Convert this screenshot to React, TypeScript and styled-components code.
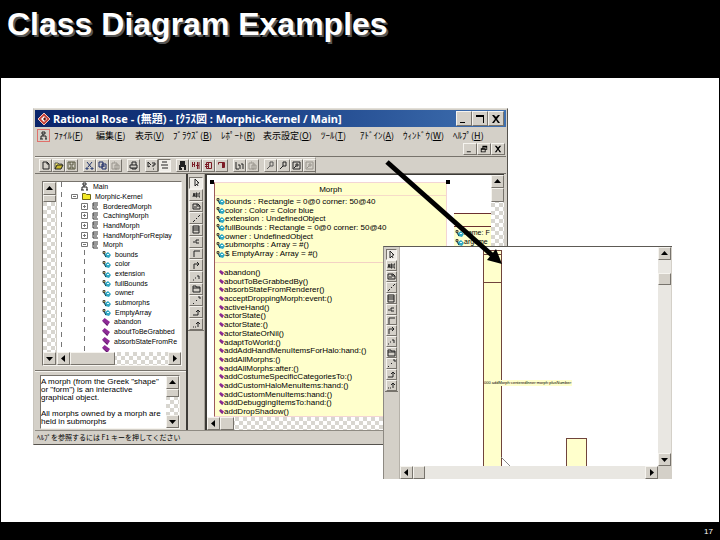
import React from "react";
import styled, { createGlobalStyle, css } from "styled-components";

const FACE = "#d4d0c8";
const LIGHT = "#f6f4ef";
const SHADE = "#77736c";
const CARD = "#ffffcc";
const SANS = '"Liberation Sans", "Noto Sans CJK JP", sans-serif';

const GlobalStyle = createGlobalStyle`
  * { box-sizing: border-box; }
  html, body { margin: 0; background: #000; }
  body { font-family: ${SANS}; color: #000; }
  button { font: inherit; color: inherit; }
  ul { list-style: none; margin: 0; padding: 0; }
`;

const checker = css`
  background: repeating-conic-gradient(#d8d6d0 0% 25%, #fff 0% 50%) 0 0 / 8px 8px;
`;

const raised = css`
  border: 1px solid;
  border-color: ${LIGHT} ${SHADE} ${SHADE} ${LIGHT};
  background: ${FACE};
`;

/* ---------- slide ---------- */

const Slide = styled.div`
  display: flex;
  flex-direction: column;
  min-height: 100vh;
  background: #000;
`;

const Header = styled.header`
  min-height: 78px;
  padding: 6px 7px;
`;

const Title = styled.h1`
  margin: 0;
  font: bold 32px/36px ${SANS};
  color: #fff;
  text-shadow: 2px 2px 0 #555;
`;

const Stage = styled.main`
  flex: 1;
  display: grid;
  grid-template-columns: 32fr 350fr 125fr 164fr 47fr;
  grid-template-rows: 30px 138px 199px 34px 1fr;
  margin: 0 1px;
  background: #fff;
`;

const Footer = styled.footer`
  display: flex;
  align-items: center;
  justify-content: flex-end;
  height: 18px;
  padding: 2px 7px 0 0;
  font: 8px/10px ${SANS};
  color: #fff;
`;

/* ---------- windows ---------- */

const RoseWindow = styled.section`
  grid-area: 2 / 2 / 4 / 4;
  display: flex;
  flex-direction: column;
  min-width: 0;
  border: 1px solid;
  border-color: #e2dfd8 #55524d #55524d #c8c4bc;
  padding: 1px;
  background: ${FACE};
`;

const TitleBar = styled.div`
  display: flex;
  align-items: center;
  gap: 2px;
  height: 17px;
  padding: 0 2px;
  background: linear-gradient(90deg, #0a246a, #1c4288 50%, #3f70b0);
  color: #fff;
`;

const Caption = styled.h2`
  flex: 1;
  margin: 0;
  font: bold 11px/16px "Noto Sans", "Noto Sans CJK JP", sans-serif;
  white-space: nowrap;
`;

const ButtonGroup = styled.div`
  display: flex;
`;

const WindowButton = styled.button<{ $small?: boolean }>`
  ${raised}
  display: grid;
  place-items: center;
  width: ${(p) => (p.$small ? 14 : 16)}px;
  height: ${(p) => (p.$small ? 12 : 15)}px;
  padding: 0;
`;

const MenuBar = styled.nav`
  display: grid;
  grid-template-columns: 19px 42px 39px 38px 48px 42px 58px 39px 43px 50px 1fr;
  align-items: center;
  height: 15px;
  padding-top: 1px;
`;

const MenuButton = styled.button`
  padding: 0;
  border: 0;
  background: none;
  font: 9px/13px "Noto Sans CJK JP", sans-serif;
  text-align: left;
  white-space: nowrap;
`;

const DocButton = styled(MenuButton)`
  display: grid;
  place-items: center;
  width: 13px;
  height: 13px;
  margin-left: 2px;
  border: 1px solid #e0706a;
`;

const ChildButtons = styled.div`
  display: flex;
  justify-content: flex-end;
  height: 15px;
  padding: 1px 1px 0;
  border-bottom: 1px solid ${SHADE};
`;

const ToolBar = styled.div`
  display: flex;
  width: 281px;
  height: 16px;
  padding: 1px 4px;
  gap: 5px;
  border-top: 1px solid ${LIGHT};
  border-right: 1px solid #9a968e;
`;

const ToolGroup = styled.div`
  display: flex;
`;

const ToolButton = styled.button<{ $pressed?: boolean }>`
  ${raised}
  display: grid;
  place-items: center;
  width: 13px;
  height: 13px;
  padding: 0;
  ${(p) => p.$pressed && css`
    background: #efede8;
    border-color: ${SHADE} ${LIGHT} ${LIGHT} ${SHADE};
  `}
`;

const Body = styled.div`
  flex: 1;
  display: grid;
  grid-template-columns: 153px 17px minmax(0, 1fr);
  min-height: 0;
  border-top: 1px solid ${SHADE};
`;

const SidePane = styled.div`
  display: flex;
  flex-direction: column;
  border-right: 2px solid #3c3a36;
`;

const TreeFrame = styled.div`
  display: grid;
  grid-template-columns: 14px minmax(0, 1fr);
  height: 185px;
  margin: 7px 4px 4px 7px;
  border: 1px solid;
  border-color: ${SHADE} ${LIGHT} ${LIGHT} ${SHADE};
`;

const TreeColumn = styled.div`
  display: flex;
  flex-direction: column;
  min-width: 0;
`;

const Tree = styled.ul`
  flex: 1;
  display: grid;
  grid-template-rows: repeat(17, 1fr) 6px;
  overflow: hidden;
  background:
    repeating-linear-gradient(#777 0 5px, #fff 5px 10px) 4px 0 / 1px 100% no-repeat,
    #fff;
`;

const TreeItem = styled.li<{ $level: number }>`
  display: flex;
  align-items: center;
  gap: 4px;
  min-height: 0;
  padding-left: ${(p) => [23, 14, 24, 45][p.$level]}px;
  font: 7px/9px ${SANS};
  white-space: nowrap;
  ${(p) => p.$level === 3 && css`
    background: linear-gradient(#777 0 5px, transparent 5px) 27px 0 / 1px 100% no-repeat;
  `}
`;

const Expander = styled.button`
  display: grid;
  place-items: center;
  width: 7px;
  height: 7px;
  padding: 0;
  border: 0;
  background: #fff;
`;

const DocFrame = styled.div`
  display: flex;
  height: 54px;
  margin: 0 6px 0 5px;
  border: 1px solid;
  border-color: ${SHADE} ${LIGHT} ${LIGHT} ${SHADE};
`;

const Splitter = styled.div`
  height: 5px;
  border-top: 1px solid ${SHADE};
  box-shadow: inset 0 1px 0 ${LIGHT};
`;

const DocText = styled.textarea`
  flex: 1;
  min-width: 0;
  padding: 2px 0 0;
  border: 0;
  outline: 0;
  resize: none;
  overflow: hidden;
  background: #fff;
  color: #000;
  font: 8px/8px ${SANS};
`;

/* ---------- scroll bars ---------- */

const Bar = styled.div<{ $horizontal?: boolean; $plain?: boolean }>`
  display: flex;
  flex: none;
  flex-direction: ${(p) => (p.$horizontal ? "row" : "column")};
  ${(p) => (p.$horizontal ? "height: 13px;" : "width: 13px;")}
  ${(p) => (p.$plain ? "background: #e9e7e2;" : checker)}
`;

const BarButton = styled.button`
  ${raised}
  display: grid;
  place-items: center;
  flex: none;
  width: 13px;
  height: 13px;
  padding: 0;
`;

const Space = styled.div<{ $size?: number }>`
  flex: ${(p) => (p.$size === undefined ? "1" : `0 0 ${p.$size}px`)};
`;

const Thumb = styled.div<{ $size: number }>`
  ${raised}
  flex: 0 0 ${(p) => p.$size}px;
`;

const Corner = styled.div`
  background: ${FACE};
`;

type Dir = "up" | "down" | "left" | "right";
const arrowShape: Record<Dir, string> = {
  up: "M0 5h7L3.5 1z",
  down: "M0 2h7L3.5 6z",
  left: "M5 0v7L1 3.5z",
  right: "M2 0v7l4-3.5z",
};

function Arrow({ dir }: { dir: Dir }) {
  return (
    <BarButton aria-label={`Scroll ${dir}`}>
      <svg width="7" height="7" viewBox="0 0 7 7"><path d={arrowShape[dir]} /></svg>
    </BarButton>
  );
}

interface ScrollProps {
  horizontal?: boolean;
  plain?: boolean;
  before?: number;
  thumb: number;
}

function ScrollBar({ horizontal, plain, before = 0, thumb }: ScrollProps) {
  return (
    <Bar $horizontal={horizontal} $plain={plain}>
      <Arrow dir={horizontal ? "left" : "up"} />
      <Space $size={before} />
      <Thumb $size={thumb} />
      <Space />
      <Arrow dir={horizontal ? "right" : "down"} />
    </Bar>
  );
}

/* ---------- diagram ---------- */

const ToolBox = styled.div<{ $height: number }>`
  display: grid;
  grid-auto-rows: 1fr;
  height: ${(p) => p.$height}px;
  padding: 0 1px;
  border-bottom: 1px solid ${SHADE};
  ${ToolButton} { width: 100%; height: 100%; min-height: 0; }
`;

const ToolSide = styled.div`
  padding-top: 3px;
  border-right: 1px solid #a7a39b;
`;

const Canvas = styled.div`
  display: grid;
  grid-template-columns: minmax(0, 1fr) 13px;
  grid-template-rows: minmax(0, 1fr) 13px;
  min-width: 0;
  border-left: 2px solid #3c3a36;
  border-top: 1px solid #3c3a36;
  margin: 0 2px 1px 0;
`;

const Sheet = styled.div`
  display: flex;
  align-items: flex-start;
  gap: 4px;
  padding: 5px 0 0 3px;
  overflow: hidden;
  background: #fff;
`;

const ClassFrame = styled.div`
  flex: 0 0 240px;
  display: grid;
  grid-template-columns: 4px 1fr 4px;
`;

const Handle = styled.i`
  z-index: 1;
  width: 4px;
  height: 4px;
  background: #000;
  &:nth-of-type(2) { grid-column: 3; }
`;

const ClassCard = styled.article`
  grid-column: 1 / -1;
  margin: -2px 3px 0 4px;
  border: 1px solid #f3d5d5;
  border-left-color: #9c5a5a;
  background: ${CARD};
`;

const ClassName = styled.h3`
  margin: 0;
  height: 13px;
  border-bottom: 1px solid #f6dcc8;
  text-align: center;
  font: 8px/14px ${SANS};
`;

const Features = styled.ul<{ $height: number; $tail?: boolean }>`
  display: grid;
  grid-auto-rows: 1fr;
  height: ${(p) => p.$height}px;
  margin: ${(p) => (p.$tail ? "5px 0 0 4px" : "1px 0 4px 1px")};
`;

const Feature = styled.li`
  display: flex;
  align-items: center;
  min-height: 0;
  font: 8px/9px ${SANS};
  white-space: nowrap;
`;

const Divider = styled.hr`
  height: 1px;
  margin: 0;
  border: 0;
  background: #f3d2c4;
`;

const SideCard = styled.article`
  flex: 1;
  min-width: 0;
  margin-top: 33px;
  border-top: 1px solid #6b3030;
  background: ${CARD};
  overflow: hidden;
  ${Feature} { font-size: 7px; }
`;

const SideHead = styled.div`
  height: 13px;
  border-bottom: 1px solid #6b3030;
`;

const StatusBar = styled.div`
  height: 13px;
  padding-left: 2px;
  border-top: 1px solid #8f8b83;
  font: 7px/12px "Noto Sans CJK JP", sans-serif;
  white-space: nowrap;
`;

/* ---------- second window ---------- */

const DetailWindow = styled.section`
  grid-area: 3 / 3 / 5 / 5;
  z-index: 1;
  display: grid;
  grid-template-columns: 16px minmax(0, 1fr) 13px;
  grid-template-rows: minmax(0, 1fr) 13px;
  padding-right: 1px;
  border-top: 1px solid #5d5a55;
  border-left: 1px solid #8d8982;
  background: ${FACE};
`;

const DetailTools = styled.div`
  grid-row: 1 / 3;
  padding: 2px 1px 0;
  border-right: 1px solid #b5b1a9;
`;

const DetailSheet = styled.div`
  position: relative;
  overflow: hidden;
  background: #fff;
`;

const TallClass = styled.div`
  position: absolute;
  top: 3px;
  bottom: 0;
  left: 83px;
  width: 19px;
  border: 1px solid #70443c;
  border-bottom: 0;
  background: ${CARD};
  &::before, &::after {
    content: "";
    display: block;
    border-bottom: 1px solid #70443c;
  }
  &::before { height: 3px; }
  &::after { height: 27px; }
`;

const ShortClass = styled.div`
  position: absolute;
  bottom: 0;
  left: 166px;
  width: 21px;
  height: 28px;
  border: 1px solid #70443c;
  border-bottom: 0;
  background: ${CARD};
`;

const RelationLabel = styled.span`
  position: absolute;
  top: 133px;
  left: 84px;
  background: ${CARD};
  font: 4px/6px ${SANS};
  white-space: nowrap;
`;

const RelationLine = styled.svg`
  position: absolute;
  bottom: 0;
  left: 101px;
`;

const Pointer = styled.svg`
  grid-area: 2 / 3 / 4 / 4;
  z-index: 2;
  margin-top: 50px;
  pointer-events: none;
`;

/* ---------- icons ---------- */

const paths = {
  arrow: "M3 1v7l2-2 1 2M3 1l4 4H5",
  abc: "M1 7l1-4 1 4M1.5 5.500h1M4 7V3h1v4zM8 3H7v4h1M4 5h1",
  note: "M1 2h5l2 2v3H1zM5 2v2h3M2 5h3",
  line: "M1 8l2-2M4 5l1-1M6 3l2-2",
  klass: "M1 1h6v7H1zM1 3h6M1 5h6",
  iface: "M4 3h3M4 3v3h3M1 5h2",
  assoc: "M2 8V2h6",
  dir: "M2 8V3h5M5 1l2 2-2 2",
  dash: "M1 7h1M3 5h1M5 3h2v3",
  pack: "M1 8V2h3v1h4v5zM1 4h7",
  dep: "M1 8l1-1M4 5l1-1M6 1h2v2",
  gen: "M1 7h5V2M4 4l2-2 2 2",
  real: "M1 7h1M3 7h1M6 7V2M4 4l2-2 2 2",
  fresh: "M2 1h4l2 2v5H2zM6 1v2h2",
  save: "M1 1h7v7H1zM3 1v3h3V1M3 8V6h3v2",
  cut: "M2 1l4 5M7 1L3 6M1 7h2v1H1zM6 7h2v1H6z",
  copy: "M1 1h4v5H1zM4 3h4v5H4zM5 5h2",
  paste: "M1 2h5v6H1zM3 1h1M4 4h4v4H4z",
  print: "M1 4h7v3H1zM3 4V1h4v3M3 7v1h4V7",
  help: "M1 1v5l2-1M1 1l3 3M5 2h3v2H6v2M6 8h1",
  rows: "M2 1h5M1 4h7M2 7h6",
  tree: "M3 1h3v2H3zM4 3v2M2 8V5h5v3M1 8h3M6 8h2",
  inter: "M1.500 1v5M3.500 1v5M1 3.500h3M6.500 1v7M8 1v7M5 4.500h3",
  comp: "M2.500 1.500h5v6h-5zM4.500 2v5M1 3.500h3M1 5.500h3",
  deploy: "M1.500 3.500v-2h6v5h-2M5.500 1v6M6.500 1v6",
  zoom: "M4 1h3v4H4zM4 5L1 8",
  fit: "M1 1h7v7H1zM4 3h2v2H4zM4 5L2 7",
  bars: "M1 1v7h3M3 4h2v4M6 3h2v5",
};
type IconName = keyof typeof paths;

function Glyph({ name, color = "#222", heavy }: { name: IconName; color?: string; heavy?: boolean }) {
  return (
    <svg width="9" height="9" viewBox="0 0 9 9" aria-hidden="true">
      <path d={paths[name]} fill="none" stroke={color} strokeWidth={heavy ? 2 : 1} />
    </svg>
  );
}

function OpenFolder() {
  return (
    <svg width="10" height="9" viewBox="0 0 10 9" aria-hidden="true">
      <path d="M1 8V2h3l1 1h3v2" fill="#f5e96a" stroke="#555" />
      <path d="M1 8l2-4h6L7 8z" fill="#c9b92e" stroke="#222" />
    </svg>
  );
}

function Folder() {
  return (
    <svg width="9" height="8" viewBox="0 0 9 8" aria-hidden="true">
      <path d="M.5 7.500V1.500h3l1 1h4v5z" fill="#f4ea28" stroke="#6e6714" />
    </svg>
  );
}

function AttributeIcon() {
  return (
    <svg width="9" height="8" viewBox="0 0 9 8" aria-hidden="true">
      <path d="M1 1.500h2v2H1z" fill="#e9dd55" stroke="#444" />
      <path d="M3 4l3-2 3 3-2 3-4-1z" fill="#31a8c4" />
      <path d="M2 4l2 3" stroke="#123c48" />
      <path d="M5 4h2v1H5z" fill="#e8ffff" />
    </svg>
  );
}

function MethodIcon({ size = 5 }: { size?: number }) {
  return (
    <svg width={size} height={size} viewBox="0 0 6 6" aria-hidden="true">
      <path d="M0 2l2-2 4 3-2 3z" fill="#8d2a96" />
      <path d="M0 2l4 3v1z" fill="#4b1154" />
    </svg>
  );
}

function ClassIcon() {
  return (
    <svg width="7" height="8" viewBox="0 0 7 8" aria-hidden="true">
      <path d="M6 1H1v6h5M1 3h5M2 5h3" fill="none" stroke="#333" />
    </svg>
  );
}

function RoseLogo() {
  return (
    <svg width="14" height="14" viewBox="0 0 14 14" aria-hidden="true">
      <path d="M7 1l6 6-6 6-6-6z" fill="#c6453c" stroke="#f2c4bc" />
      <path d="M4 7l3-3 3 3-3 3z" fill="#fff" />
      <path d="M6 7l2-2 1 2-1 2z" fill="#5b1512" />
    </svg>
  );
}

const windowShapes = {
  Minimize: "M1 8h5v1H1z",
  Maximize: "M1 1h8v8H8V3H1z",
  Restore: "M3 1h6v5H7V5h1V3H4v1H3zM1 4h6v5H1zM2 6v2h4V6z",
  Close: "M1 1h2l2 2 2-2h2L6 5l3 4H7L5 6 3 9H1l3-4z",
};
type WindowAction = keyof typeof windowShapes;

function WindowControl({ action, small }: { action: WindowAction; small?: boolean }) {
  const size = small ? 8 : 10;
  return (
    <WindowButton $small={small} aria-label={action}>
      <svg width={size} height={size} viewBox="0 0 10 10">
        <path d={windowShapes[action]} fillRule="evenodd" />
      </svg>
    </WindowButton>
  );
}

/* ---------- data ---------- */

const menus: [string, string][] = [
  ["ﾌｧｲﾙ", "F"], ["編集", "E"], ["表示", "V"], ["ﾌﾞﾗｳｽﾞ", "B"], ["ﾚﾎﾟｰﾄ", "R"],
  ["表示設定", "O"], ["ﾂｰﾙ", "T"], ["ｱﾄﾞｲﾝ", "A"], ["ｳｨﾝﾄﾞｳ", "W"], ["ﾍﾙﾌﾟ", "H"],
];

const GREY = "#98948c";
const MAROON = "#7c1c26";
type Tool = { icon: IconName | "open"; label: string; color?: string; pressed?: boolean; heavy?: boolean };
const toolGroups: Tool[][] = [
  [{ icon: "fresh", label: "New" }, { icon: "open", label: "Open" }, { icon: "save", label: "Save", color: "#55553a" }],
  [{ icon: "cut", label: "Cut", color: "#24386e" }, { icon: "copy", label: "Copy", color: "#1b2b66" }, { icon: "paste", label: "Paste", color: GREY }],
  [{ icon: "print", label: "Print" }],
  [{ icon: "help", label: "Context help" }, { icon: "rows", label: "View documentation", pressed: true }],
  [{ icon: "tree", label: "Browse class diagram", heavy: true }, { icon: "inter", label: "Browse interaction diagram", color: MAROON }, { icon: "comp", label: "Browse component diagram", color: MAROON }, { icon: "deploy", label: "Browse deployment diagram", color: MAROON }],
  [{ icon: "bars", label: "Browse parent" }, { icon: "paste", label: "Browse previous", color: GREY }],
  [{ icon: "zoom", label: "Zoom in", color: "#555" }, { icon: "zoom", label: "Zoom out" }, { icon: "fit", label: "Fit in window" }, { icon: "fit", label: "Undo fit", color: GREY }],
];

const shapeTools: { icon: IconName; label: string }[] = [
  { icon: "arrow", label: "Selection" }, { icon: "abc", label: "Text" }, { icon: "note", label: "Note" },
  { icon: "line", label: "Anchor note" }, { icon: "klass", label: "Class" }, { icon: "iface", label: "Interface" },
  { icon: "assoc", label: "Association" }, { icon: "dir", label: "Directed association" }, { icon: "dash", label: "Association class" },
  { icon: "pack", label: "Package" }, { icon: "dep", label: "Dependency" }, { icon: "gen", label: "Generalization" },
  { icon: "real", label: "Realization" },
];

type Node = { text: string; kind: "diagram" | "folder" | "class" | "attribute" | "method"; open?: boolean };
const nodes: Node[] = [
  { text: "Main", kind: "diagram" },
  { text: "Morphic-Kernel", kind: "folder", open: true },
  { text: "BorderedMorph", kind: "class" },
  { text: "CachingMorph", kind: "class" },
  { text: "HandMorph", kind: "class" },
  { text: "HandMorphForReplay", kind: "class" },
  { text: "Morph", kind: "class", open: true },
  ...["bounds", "color", "extension", "fullBounds", "owner", "submorphs", "EmptyArray"].map(
    (text): Node => ({ text, kind: "attribute" })),
  ...["abandon", "aboutToBeGrabbed", "absorbStateFromRe", ""].map((text): Node => ({ text, kind: "method" })),
];
const levels = { diagram: 0, folder: 1, class: 2, attribute: 3, method: 3 };

const attributes = [
  "bounds : Rectangle = 0@0 corner: 50@40",
  "color : Color = Color blue",
  "extension : UndefinedObject",
  "fullBounds : Rectangle = 0@0 corner: 50@40",
  "owner : UndefinedObject",
  "submorphs : Array = #()",
  "$ EmptyArray : Array = #()",
];

const methods = [
  "abandon()", "aboutToBeGrabbedBy()", "absorbStateFromRenderer()", "acceptDroppingMorph:event:()",
  "activeHand()", "actorState()", "actorState:()", "actorStateOrNil()", "adaptToWorld:()",
  "addAddHandMenuItemsForHalo:hand:()", "addAllMorphs:()", "addAllMorphs:after:()",
  "addCostumeSpecificCategoriesTo:()", "addCustomHaloMenuItems:hand:()", "addCustomMenuItems:hand:()",
  "addDebuggingItemsTo:hand:()", "addDropShadow()",
];

const documentation =
  'A morph (from the Greek "shape"\nor "form") is an interactive\ngraphical object.\n\nAll morphs owned by a morph are\nheld in submorphs';

/* ---------- parts ---------- */

function ShapeToolBox({ height }: { height: number }) {
  return (
    <ToolBox $height={height} role="toolbar" aria-label="Toolbox">
      {shapeTools.map((t, i) => (
        <ToolButton key={t.label} $pressed={i === 0} aria-label={t.label}><Glyph name={t.icon} /></ToolButton>
      ))}
    </ToolBox>
  );
}

function TreeNode({ node }: { node: Node }) {
  const branch = node.kind === "class" || node.kind === "folder";
  return (
    <TreeItem $level={levels[node.kind]}>
      {branch && (
        <Expander aria-label={`${node.open ? "Collapse" : "Expand"} ${node.text}`}>
          <svg width="7" height="7" viewBox="0 0 7 7">
            <path d={node.open ? "M.5 1.500h6v4h-6zM2 3.500h3" : "M.5.5h6v6h-6zM2 3.500h3M3.500 2v3"} fill="none" stroke="#777" />
          </svg>
        </Expander>
      )}
      {node.kind === "diagram" && <Glyph name="tree" />}
      {node.kind === "folder" && <Folder />}
      {node.kind === "class" && <ClassIcon />}
      {node.kind === "attribute" && <AttributeIcon />}
      {node.kind === "method" && <MethodIcon size={8} />}
      <span>{node.text}</span>
    </TreeItem>
  );
}

export default function App() {
  return (
    <Slide>
      <GlobalStyle />
      <Header><Title>Class Diagram Examples</Title></Header>
      <Stage>
        <RoseWindow>
          <TitleBar>
            <RoseLogo />
            <Caption>Rational Rose - (無題) - [ｸﾗｽ図 : Morphic-Kernel / Main]</Caption>
            <ButtonGroup>
              <WindowControl action="Minimize" />
              <WindowControl action="Maximize" />
              <WindowControl action="Close" />
            </ButtonGroup>
          </TitleBar>
          <MenuBar aria-label="Menu">
            <DocButton aria-label="Document"><Glyph name="tree" /></DocButton>
            {menus.map(([text, key]) => (
              <MenuButton key={key}>{text}(<u>{key}</u>)</MenuButton>
            ))}
          </MenuBar>
          <ChildButtons>
            <WindowControl small action="Minimize" />
            <WindowControl small action="Restore" />
            <WindowControl small action="Close" />
          </ChildButtons>
          <ToolBar role="toolbar" aria-label="Standard">
            {toolGroups.map((group, i) => (
              <ToolGroup key={i}>
                {group.map((t) => (
                  <ToolButton key={t.label} $pressed={t.pressed} aria-label={t.label}>
                    {t.icon === "open" ? <OpenFolder /> : <Glyph name={t.icon} color={t.color} heavy={t.heavy} />}
                  </ToolButton>
                ))}
              </ToolGroup>
            ))}
          </ToolBar>
          <Body>
            <SidePane>
              <TreeFrame>
                <ScrollBar thumb={7} />
                <TreeColumn>
                  <Tree>{nodes.map((n, i) => <TreeNode key={i} node={n} />)}</Tree>
                  <ScrollBar horizontal thumb={45} />
                </TreeColumn>
              </TreeFrame>
              <Splitter />
              <DocFrame>
                <DocText aria-label="Documentation" readOnly value={documentation} />
                <ScrollBar thumb={8} />
              </DocFrame>
            </SidePane>
            <ToolSide><ShapeToolBox height={154} /></ToolSide>
            <Canvas>
              <Sheet>
                <ClassFrame>
                  <Handle /><Handle />
                  <ClassCard>
                    <ClassName>Morph</ClassName>
                    <Features $height={61}>
                      {attributes.map((a) => <Feature key={a}><AttributeIcon />{a}</Feature>)}
                    </Features>
                    <Divider />
                    <Features $height={148} $tail>
                      {methods.map((m) => <Feature key={m}><MethodIcon />{m}</Feature>)}
                    </Features>
                  </ClassCard>
                </ClassFrame>
                <SideCard>
                  <SideHead />
                  <Features $height={18}>
                    <Feature><AttributeIcon />name: F</Feature>
                    <Feature><AttributeIcon />argume</Feature>
                  </Features>
                </SideCard>
              </Sheet>
              <ScrollBar thumb={14} />
              <ScrollBar horizontal thumb={14} />
              <Corner />
            </Canvas>
          </Body>
          <StatusBar>ﾍﾙﾌﾟを参照するには F1 キーを押してください</StatusBar>
        </RoseWindow>

        <DetailWindow>
          <DetailTools><ShapeToolBox height={143} /></DetailTools>
          <DetailSheet>
            <TallClass />
            <ShortClass />
            <RelationLine width="9" height="9" viewBox="0 0 9 9"><path d="M0 0l9 9" stroke="#888" /></RelationLine>
            <RelationLabel>000 addMorph:centeredInner:morph:plusNumber:</RelationLabel>
          </DetailSheet>
          <ScrollBar plain before={13} thumb={12} />
          <ScrollBar horizontal plain thumb={12} />
          <Corner />
        </DetailWindow>

        <Pointer width="122" height="112" viewBox="0 0 122 112" aria-hidden="true">
          <path d="M4 4l106 94" stroke="#000" strokeWidth="5" />
          <path d="M119 106l-15-4 9-11z" />
        </Pointer>
      </Stage>
      <Footer>17</Footer>
    </Slide>
  );
}
